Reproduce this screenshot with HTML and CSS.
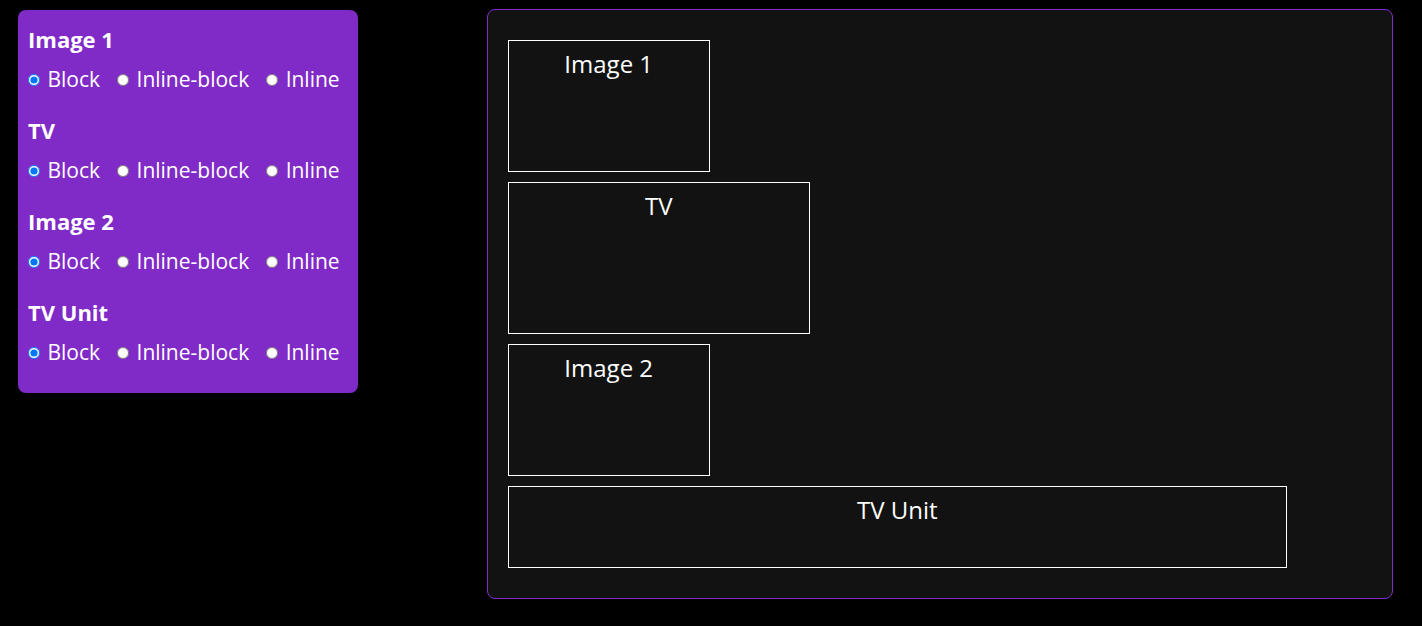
FILE: index.html
```html
<!DOCTYPE html>
<html lang="en">
<head>
  <meta charset="UTF-8">
  <title>Display playground</title>
  <link rel="stylesheet" href="styles.css">
</head>
<body>
  <!-- Controls -->
  <div class="controls">
    <div class="group">
      <h3>Image 1</h3>
      <div class="options">
        <label><input type="radio" name="img1" checked> Block</label>
        <label><input type="radio" name="img1"> Inline-block</label>
        <label><input type="radio" name="img1"> Inline</label>
      </div>
    </div>
    <div class="group">
      <h3>TV</h3>
      <div class="options">
        <label><input type="radio" name="tv" checked> Block</label>
        <label><input type="radio" name="tv"> Inline-block</label>
        <label><input type="radio" name="tv"> Inline</label>
      </div>
    </div>
    <div class="group">
      <h3>Image 2</h3>
      <div class="options">
        <label><input type="radio" name="img2" checked> Block</label>
        <label><input type="radio" name="img2"> Inline-block</label>
        <label><input type="radio" name="img2"> Inline</label>
      </div>
    </div>
    <div class="group">
      <h3>TV Unit</h3>
      <div class="options">
        <label><input type="radio" name="unit" checked> Block</label>
        <label><input type="radio" name="unit"> Inline-block</label>
        <label><input type="radio" name="unit"> Inline</label>
      </div>
    </div>
  </div>

  <!-- Stage -->
  <div class="stage">
    <div class="box image">Image 1</div>
    <div class="box tv">TV</div>
    <div class="box image">Image 2</div>
    <div class="box unit">TV Unit</div>
  </div>
</body>
</html>
```

FILE: styles.css
```css
/* Global Styles */
body {
  margin: 0;
  padding: 9px 29px 0 18px;
  background: #000;
  color: #fff;
  font-family: 'Open Sans', 'Noto Sans', sans-serif;
  display: flex;
  align-items: flex-start;
  gap: 129px;
}
/* Controls */
.controls {
  width: 340px;
  box-sizing: border-box;
  margin-top: 1px;
  padding: 13px 10px 6px;
  background: #802bc8;
  border-radius: 8px;
}
.group {
  margin-bottom: 17px;
}
.group h3 {
  margin: 0 0 7px;
  font-size: 22px;
  font-weight: 700;
  line-height: 32px;
}
.options {
  display: flex;
  gap: 17px;
  white-space: nowrap;
}
.options label {
  font-size: 21px;
  line-height: 35px;
}
.options input {
  width: 12px;
  height: 12px;
  margin: 0 2px 0 0;
  vertical-align: 1px;
}
/* Stage */
.stage {
  width: 907px;
  box-sizing: border-box;
  padding: 20px;
  background: #121212;
  border: 1px solid #802bc8;
  border-radius: 8px;
}
.box {
  margin: 10px 0;
  border: 1px solid #fff;
  text-align: center;
  font-size: 24px;
  padding-top: 6px;
  box-sizing: border-box;
}
.image {
  width: 202px;
  height: 132px;
}
.tv {
  width: 302px;
  height: 152px;
}
.unit {
  width: 779px;
  height: 82px;
}
```
